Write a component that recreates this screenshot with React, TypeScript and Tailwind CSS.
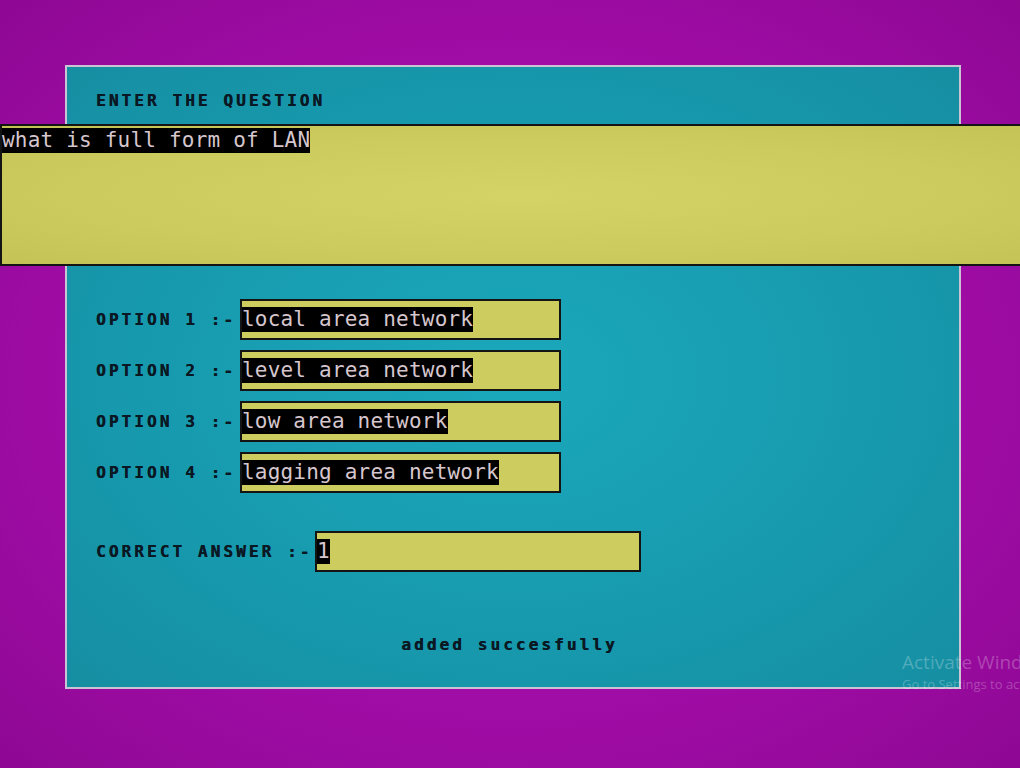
const labelFont = "font-['DejaVu_Sans_Mono',monospace] font-bold text-[16px] leading-4 tracking-[3.1px] text-[#0a1824] [text-shadow:0.4px_0_0_#0a1824]";
const inputFont = "font-['DejaVu_Sans_Mono','Liberation_Mono',monospace] text-[21px] leading-[25px] tracking-[0.2px] text-[#d6c6ce] bg-black";

const options = [
  { n: 1, value: 'local area network' },
  { n: 2, value: 'level area network' },
  { n: 3, value: 'low area network' },
  { n: 4, value: 'lagging area network' },
];

function Field({ value, width }: { value: string; width: string }) {
  return (
    <div className={`${width} h-[41px] border-2 border-[#141414] bg-[#cdcc5e] pt-[6px]`}>
      <span className={`${inputFont} inline-block whitespace-pre`}>{value}</span>
    </div>
  );
}

export default function App() {
  return (
    <div className="relative w-[1020px] h-[768px] overflow-hidden bg-[radial-gradient(ellipse_at_center,#b012b4_0%,#a00ca6_60%,#8e0894_100%)] pt-[65px] pl-[65px]">
      <div className="w-[896px] h-[624px] border-2 border-[#c9c3d4] bg-[radial-gradient(ellipse_at_center,#1ba8bc_0%,#1799ad_60%,#168ea2_100%)] flex flex-col">
        <div className={`${labelFont} mt-[26px] ml-[29px]`}>ENTER THE QUESTION</div>

        <div className="-ml-[67px] w-[1040px] h-[142px] mt-[15px] border-2 border-[#141414] bg-[radial-gradient(ellipse_at_center,#d4d466_0%,#cbcb5e_60%,#c3c356_100%)] pt-[2px]">
          <span className={`${inputFont} inline-block whitespace-pre`}>what is full form of LAN</span>
        </div>

        <div className="flex flex-col gap-[10px] mt-[33px] ml-[29px]">
          {options.map((o) => (
            <div key={o.n} className="flex items-center">
              <div className={`${labelFont} w-[144px] whitespace-pre`}>{`OPTION ${o.n} :-`}</div>
              <Field value={o.value} width="w-[321px]" />
            </div>
          ))}
        </div>

        <div className="flex items-center mt-[38px] ml-[29px]">
          <div className={`${labelFont} w-[219px] whitespace-pre`}>CORRECT ANSWER :-</div>
          <Field value="1" width="w-[326px]" />
        </div>

        <div className={`${labelFont} mt-[65px] text-center mr-[7px]`}>added succesfully</div>
      </div>

      <div className="absolute left-[902px] top-[650px] whitespace-nowrap font-['Open_Sans',sans-serif] text-[#ffffff]/25">
        <div className="text-[19px] leading-6">Activate Windows</div>
        <div className="text-[13px] leading-5">Go to Settings to activate Windows.</div>
      </div>
    </div>
  );
}
